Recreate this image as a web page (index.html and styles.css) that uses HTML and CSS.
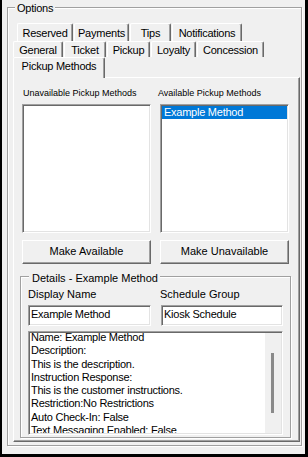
FILE: index.html
```html
<!DOCTYPE html>
<html>
<head>
<meta charset="utf-8">
<link rel="stylesheet" href="styles.css">
</head>
<body>
<div class="window">
  <fieldset class="options">
    <legend class="options-legend">Options</legend>
    <div class="tabrow row1">
      <div class="tab t-reserved">Reserved</div>
      <div class="tab t-payments">Payments</div>
      <div class="tab t-tips">Tips</div>
      <div class="tab t-notifications">Notifications</div>
    </div>
    <div class="tabrow row2">
      <div class="tab t-general">General</div>
      <div class="tab t-ticket">Ticket</div>
      <div class="tab t-pickup">Pickup</div>
      <div class="tab t-loyalty">Loyalty</div>
      <div class="tab t-concession">Concession</div>
    </div>
    <div class="tabrow row3">
      <div class="tab selected t-methods">Pickup Methods</div>
    </div>
    <div class="panel">
      <div class="lists">
        <div class="small-label">Unavailable Pickup Methods</div>
        <div class="small-label shift">Available Pickup Methods</div>
        <div class="listbox"></div>
        <div class="listbox">
          <div class="list-item selected-item">Example Method</div>
        </div>
        <div class="button">Make Available</div>
        <div class="button">Make Unavailable</div>
      </div>
      <fieldset class="details">
        <legend class="details-legend">Details - Example Method</legend>
        <div class="detail-grid">
          <div class="field">
            <div class="label">Display Name</div>
            <div class="textbox">Example Method</div>
          </div>
          <div class="field">
            <div class="label">Schedule Group</div>
            <div class="textbox">Kiosk Schedule</div>
          </div>
          <div class="multiline">
            <div class="multi-view">
              <div class="multi-text">
                <div>Name: Example Method</div>
                <div>Description:</div>
                <div>This is the description.</div>
                <div>Instruction Response:</div>
                <div>This is the customer instructions.</div>
                <div>Restriction:No Restrictions</div>
                <div>Auto Check-In: False</div>
                <div>Text Messaging Enabled: False</div>
              </div>
            </div>
            <div class="scrollbar"><div class="thumb"></div></div>
          </div>
        </div>
      </fieldset>
    </div>
  </fieldset>
</div>
</body>
</html>
```
FILE: styles.css
```css
* { box-sizing: border-box; }
html, body { margin: 0; padding: 0; }
body {
  width: 308px;
  height: 457px;
  background: #000;
  font-family: "Liberation Sans", Arial, sans-serif;
  font-size: 11px;
  color: #000;
  overflow: hidden;
}
.window {
  width: 308px;
  height: 457px;
  background: #f0f0f0;
  border-left: 2px solid #000;
  border-right: 3px solid #000;
  border-bottom: 3px solid #000;
  padding-left: 5px;
}
.options {
  margin: 0;
  width: 295px;
  min-width: 0;
  border: 1px solid #a0a0a0;
  box-shadow: inset 1px 1px 0 #fff, 1px 1px 0 #fff;
  padding: 8px 1px 3px 5px;
}
.options-legend {
  margin-left: 2px;
  padding: 2px 2px 0 2px;
  line-height: 13px;
  letter-spacing: -0.25px;
  background: #f0f0f0;
}
.tabrow { display: flex; gap: 1px; }
.row1 { height: 18px; margin-left: 4px; }
.row2 { height: 16px; }
.row3 { height: 20px; }
.tab {
  border: 1px solid #fff;
  border-bottom: none;
  border-right-color: #696969;
  box-shadow: inset -1px 0 0 #a0a0a0;
  border-radius: 2px 2px 0 0;
  text-align: center;
  letter-spacing: -0.25px;
  white-space: nowrap;
  background: #f0f0f0;
}
.row1 .tab { padding-top: 1px; line-height: 16px; }
.row2 .tab { padding-top: 2px; line-height: 13px; }
.row3 .tab { padding-top: 2px; line-height: 13px; }
.t-reserved { width: 56px; }
.t-payments { width: 55px; }
.t-tips { width: 41px; }
.t-notifications { width: 70px; }
.t-general { width: 50px; }
.t-ticket { width: 42px; }
.t-pickup { width: 43px; }
.t-loyalty { width: 45px; }
.t-concession { width: 67px; }
.t-methods { width: 92px; }
.tab.selected {
  position: relative;
  z-index: 1;
  height: 21px;
  margin-bottom: -1px;
}
.panel {
  border: 1px solid #fff;
  border-right-color: #696969;
  border-bottom-color: #696969;
  box-shadow: inset -1px -1px 0 #a0a0a0;
  padding: 10px 8px 3px 8px;
}
.lists {
  display: grid;
  grid-template-columns: 129px 129px;
  column-gap: 9px;
}
.small-label {
  font-size: 9px;
  line-height: 11px;
  margin-left: 1px;
  margin-bottom: 5px;
  white-space: nowrap;
}
.small-label.shift { margin-left: -2px; }
.listbox {
  height: 129px;
  background: #fff;
  border: 1px solid;
  border-color: #a0a0a0 #fff #fff #a0a0a0;
  box-shadow: inset 1px 1px 0 #696969, inset -1px -1px 0 #e3e3e3;
  padding: 1px;
}
.list-item {
  height: 13px;
  line-height: 13px;
  padding-left: 2px;
  letter-spacing: -0.25px;
}
.selected-item { background: #0078d7; color: #fff; }
.button {
  margin-top: 7px;
  height: 24px;
  line-height: 21px;
  text-align: center;
  background: #f0f0f0;
  border: 1px solid;
  border-color: #fff #696969 #696969 #fff;
  box-shadow: inset -1px -1px 0 #a0a0a0;
}
.details {
  margin: 4px 0 0 -2px;
  width: 271px;
  min-width: 0;
  border: 1px solid #a0a0a0;
  box-shadow: inset 1px 1px 0 #fff, 1px 1px 0 #fff;
  padding: 3px 6px 2px 7px;
}
.details-legend {
  margin-left: 1px;
  padding: 4px 2px 0 3px;
  line-height: 13px;
  background: #f0f0f0;
}
.detail-grid {
  display: grid;
  grid-template-columns: 123px 122px;
  column-gap: 10px;
}
.label {
  line-height: 13px;
  margin-bottom: 4px;
  white-space: nowrap;
}
.field:nth-child(2) .label { margin-left: -1px; }
.textbox {
  height: 21px;
  background: #fff;
  border: 1px solid;
  border-color: #a0a0a0 #fff #fff #a0a0a0;
  box-shadow: inset 1px 1px 0 #696969, inset -1px -1px 0 #e3e3e3;
  padding: 1px 2px 0 2px;
  line-height: 14px;
  letter-spacing: -0.25px;
  white-space: nowrap;
  overflow: hidden;
}
.multiline {
  grid-column: 1 / 3;
  margin-top: 5px;
  height: 104px;
  background: #fff;
  border: 1px solid;
  border-color: #a0a0a0 #fff #fff #a0a0a0;
  box-shadow: inset 1px 1px 0 #696969, inset -1px -1px 0 #e3e3e3;
  padding: 1px;
  display: flex;
}
.multi-view {
  flex: 1;
  overflow: hidden;
  padding-left: 1px;
}
.multi-text {
  margin-top: -2px;
  line-height: 13.3px;
  letter-spacing: -0.25px;
  white-space: nowrap;
}
.scrollbar {
  width: 16px;
  background: #f0f0f0;
  padding: 20px 0 0 6px;
}
.thumb {
  width: 3px;
  height: 60px;
  background: #8a8a8a;
}
```
